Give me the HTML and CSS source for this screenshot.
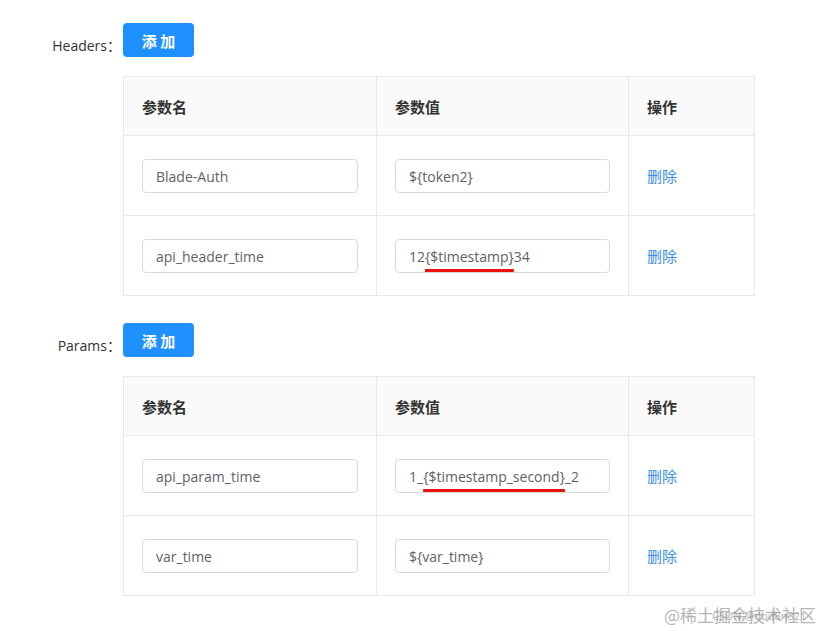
FILE: index.html
```html
<!DOCTYPE html>
<html lang="zh">
<head>
<meta charset="utf-8">
<link rel="stylesheet" href="styles.css">
</head>
<body>
<div class="page">
  <section class="group">
    <div class="group-head">
      <span class="label">Headers：</span>
      <button class="btn">添 加</button>
    </div>
    <table class="kv">
      <thead>
        <tr><th class="c1">参数名</th><th class="c2">参数值</th><th class="c3">操作</th></tr>
      </thead>
      <tbody>
        <tr>
          <td><div class="input">Blade-Auth</div></td>
          <td><div class="input">${token2}</div></td>
          <td><a class="link">删除</a></td>
        </tr>
        <tr>
          <td><div class="input">api_header_time</div></td>
          <td><div class="input">12<span class="mark">{$timestamp}</span>34</div></td>
          <td><a class="link">删除</a></td>
        </tr>
      </tbody>
    </table>
  </section>
  <section class="group second">
    <div class="group-head">
      <span class="label">Params：</span>
      <button class="btn">添 加</button>
    </div>
    <table class="kv">
      <thead>
        <tr><th class="c1">参数名</th><th class="c2">参数值</th><th class="c3">操作</th></tr>
      </thead>
      <tbody>
        <tr>
          <td><div class="input">api_param_time</div></td>
          <td><div class="input">1_<span class="mark">{$timestamp_second}</span>_2</div></td>
          <td><a class="link">删除</a></td>
        </tr>
        <tr>
          <td><div class="input">var_time</div></td>
          <td><div class="input">${var_time}</div></td>
          <td><a class="link">删除</a></td>
        </tr>
      </tbody>
    </table>
  </section>
  <div class="watermark">
    <span class="wm-light">@稀土掘金技术社区</span>
    <span class="wm-dark">CSDN @dbd8n821</span>
  </div>
</div>
</body>
</html>
```
FILE: styles.css
```css
html, body {
  margin: 0;
  padding: 0;
  background: #ffffff;
}
body {
  font-family: "Open Sans", "Noto Sans CJK SC", sans-serif;
  color: #333333;
  width: 825px;
  height: 631px;
  overflow: hidden;
}
.page {
  position: relative;
  width: 825px;
  height: 631px;
  padding-top: 23px;
  box-sizing: border-box;
}
.group {
  display: flex;
  flex-direction: column;
}
.group.second {
  margin-top: 27px;
}
.group-head {
  display: flex;
  align-items: center;
  height: 34px;
}
.label {
  width: 123px;
  box-sizing: border-box;
  padding-right: 2px;
  text-align: right;
  font-size: 14px;
  color: #333;
  padding-top: 9px;
}
.btn {
  width: 71px;
  height: 34px;
  border: none;
  border-radius: 4px;
  background: #1e90ff;
  color: #fff;
  font-family: "Noto Sans CJK SC", sans-serif;
  font-size: 15px;
  font-weight: 700;
  padding: 0;
}
.kv {
  margin-left: 123px;
  margin-top: 19px;
  width: 631px;
  border-collapse: collapse;
  table-layout: fixed;
  border: 1px solid #e8e8e8;
}
.kv th, .kv td {
  border: 1px solid #e8e8e8;
  text-align: left;
  padding: 0 18px 0 18px;
  box-sizing: border-box;
}
.kv th {
  height: 59px;
  background: #fafafa;
  font-family: "Noto Sans CJK SC", sans-serif;
  font-size: 15px;
  font-weight: 700;
  color: #333;
}
.kv td {
  height: 80px;
}
.c1 { width: 253px; }
.c2 { width: 252px; }
.c3 { width: 126px; }
.input {
  height: 34px;
  box-sizing: border-box;
  border: 1px solid #d9d9d9;
  border-radius: 4px;
  padding: 2px 13px 0 13px;
  display: flex;
  align-items: center;
  font-size: 14px;
  color: #606266;
  white-space: nowrap;
}
.mark {
  text-decoration: underline;
  text-decoration-color: #ee1111;
  text-decoration-thickness: 3px;
  text-underline-offset: 7px;
}
.link {
  font-family: "Noto Sans CJK SC", sans-serif;
  font-size: 15px;
  color: #3a8ee6;
}
.watermark {
  position: absolute;
  left: 664px;
  top: 602px;
  height: 26px;
  width: 158px;
}
.wm-light {
  position: absolute;
  left: 0;
  top: 0;
  font-family: "Noto Sans CJK SC", sans-serif;
  font-size: 17px;
  color: #b5b5b5;
  white-space: nowrap;
}
.wm-dark {
  position: absolute;
  left: 48px;
  top: 6px;
  font-family: "Noto Sans", sans-serif;
  font-size: 11px;
  color: #8a8a8a;
  white-space: nowrap;
  opacity: 0.6;
}
```
